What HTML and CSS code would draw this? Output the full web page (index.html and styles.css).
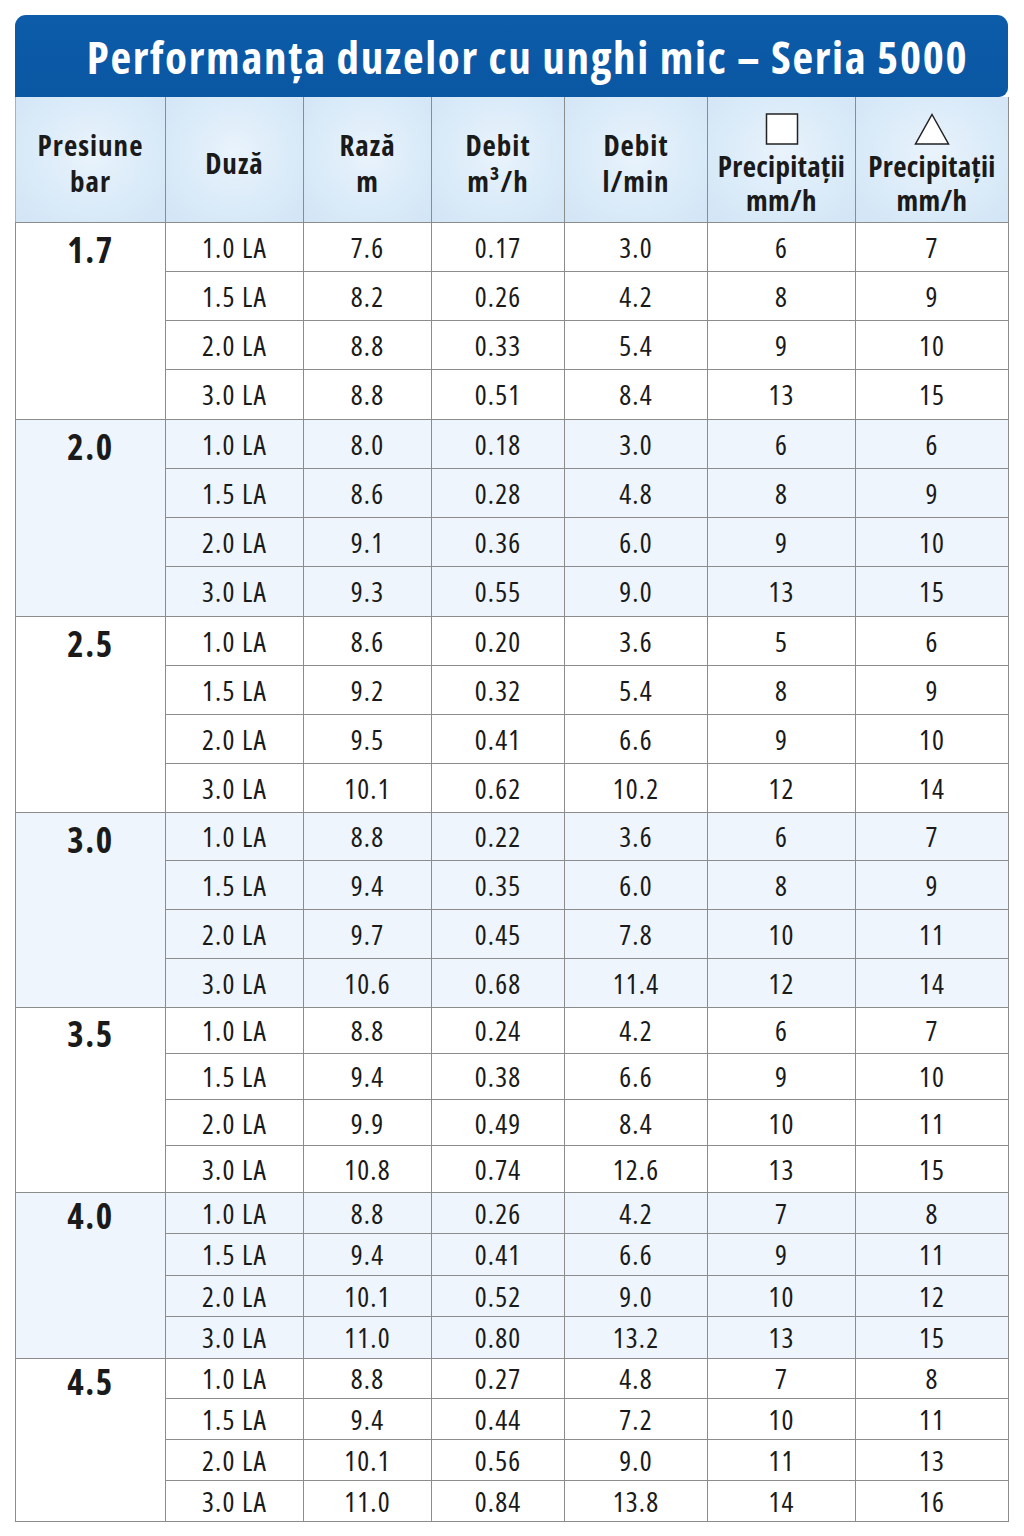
FILE: index.html
```html
<!DOCTYPE html>
<html lang="ro">
<head>
<meta charset="utf-8">
<title>Performanța duzelor cu unghi mic – Seria 5000</title>
<link rel="stylesheet" href="styles.css">
</head>
<body>
<div class="sheet">
  <div class="title">Performanța duzelor cu unghi mic – Seria 5000</div>
  <table class="perf">
    <colgroup>
      <col class="c1"><col class="c2"><col class="c3"><col class="c4"><col class="c5"><col class="c6"><col class="c7">
    </colgroup>
    <thead>
      <tr>
        <th>Presiune<br>bar</th>
        <th>Duză</th>
        <th>Rază<br>m</th>
        <th>Debit<br>m³/h</th>
        <th>Debit<br>l/min</th>
        <th class="pr"><svg class="ico" width="34" height="32" viewBox="0 0 34 32"><rect x="1.5" y="1" width="31" height="30" fill="#fff" stroke="#222" stroke-width="1.5"/></svg><span class="l1">Precipitații</span><span class="l2">mm/h</span></th>
        <th class="pr"><svg class="ico" width="36" height="32" viewBox="0 0 36 32"><polygon points="18,1.5 34.5,31 1.5,31" fill="#fff" stroke="#222" stroke-width="1.5" stroke-linejoin="miter"/></svg><span class="l1">Precipitații</span><span class="l2">mm/h</span></th>
      </tr>
    </thead>
    <tbody class="g g1">
      <tr><td class="p" rowspan="4"><div class="pl">1.7</div></td><td>1.0 LA</td><td>7.6</td><td>0.17</td><td>3.0</td><td>6</td><td>7</td></tr>
      <tr><td>1.5 LA</td><td>8.2</td><td>0.26</td><td>4.2</td><td>8</td><td>9</td></tr>
      <tr><td>2.0 LA</td><td>8.8</td><td>0.33</td><td>5.4</td><td>9</td><td>10</td></tr>
      <tr><td>3.0 LA</td><td>8.8</td><td>0.51</td><td>8.4</td><td>13</td><td>15</td></tr>
    </tbody>
    <tbody class="g g2 tint">
      <tr><td class="p" rowspan="4"><div class="pl">2.0</div></td><td>1.0 LA</td><td>8.0</td><td>0.18</td><td>3.0</td><td>6</td><td>6</td></tr>
      <tr><td>1.5 LA</td><td>8.6</td><td>0.28</td><td>4.8</td><td>8</td><td>9</td></tr>
      <tr><td>2.0 LA</td><td>9.1</td><td>0.36</td><td>6.0</td><td>9</td><td>10</td></tr>
      <tr><td>3.0 LA</td><td>9.3</td><td>0.55</td><td>9.0</td><td>13</td><td>15</td></tr>
    </tbody>
    <tbody class="g g3">
      <tr><td class="p" rowspan="4"><div class="pl">2.5</div></td><td>1.0 LA</td><td>8.6</td><td>0.20</td><td>3.6</td><td>5</td><td>6</td></tr>
      <tr><td>1.5 LA</td><td>9.2</td><td>0.32</td><td>5.4</td><td>8</td><td>9</td></tr>
      <tr><td>2.0 LA</td><td>9.5</td><td>0.41</td><td>6.6</td><td>9</td><td>10</td></tr>
      <tr><td>3.0 LA</td><td>10.1</td><td>0.62</td><td>10.2</td><td>12</td><td>14</td></tr>
    </tbody>
    <tbody class="g g4 tint">
      <tr><td class="p" rowspan="4"><div class="pl">3.0</div></td><td>1.0 LA</td><td>8.8</td><td>0.22</td><td>3.6</td><td>6</td><td>7</td></tr>
      <tr><td>1.5 LA</td><td>9.4</td><td>0.35</td><td>6.0</td><td>8</td><td>9</td></tr>
      <tr><td>2.0 LA</td><td>9.7</td><td>0.45</td><td>7.8</td><td>10</td><td>11</td></tr>
      <tr><td>3.0 LA</td><td>10.6</td><td>0.68</td><td>11.4</td><td>12</td><td>14</td></tr>
    </tbody>
    <tbody class="g g5">
      <tr><td class="p" rowspan="4"><div class="pl">3.5</div></td><td>1.0 LA</td><td>8.8</td><td>0.24</td><td>4.2</td><td>6</td><td>7</td></tr>
      <tr><td>1.5 LA</td><td>9.4</td><td>0.38</td><td>6.6</td><td>9</td><td>10</td></tr>
      <tr><td>2.0 LA</td><td>9.9</td><td>0.49</td><td>8.4</td><td>10</td><td>11</td></tr>
      <tr><td>3.0 LA</td><td>10.8</td><td>0.74</td><td>12.6</td><td>13</td><td>15</td></tr>
    </tbody>
    <tbody class="g g6 tint">
      <tr><td class="p" rowspan="4"><div class="pl">4.0</div></td><td>1.0 LA</td><td>8.8</td><td>0.26</td><td>4.2</td><td>7</td><td>8</td></tr>
      <tr><td>1.5 LA</td><td>9.4</td><td>0.41</td><td>6.6</td><td>9</td><td>11</td></tr>
      <tr><td>2.0 LA</td><td>10.1</td><td>0.52</td><td>9.0</td><td>10</td><td>12</td></tr>
      <tr><td>3.0 LA</td><td>11.0</td><td>0.80</td><td>13.2</td><td>13</td><td>15</td></tr>
    </tbody>
    <tbody class="g g7">
      <tr><td class="p" rowspan="4"><div class="pl">4.5</div></td><td>1.0 LA</td><td>8.8</td><td>0.27</td><td>4.8</td><td>7</td><td>8</td></tr>
      <tr><td>1.5 LA</td><td>9.4</td><td>0.44</td><td>7.2</td><td>10</td><td>11</td></tr>
      <tr><td>2.0 LA</td><td>10.1</td><td>0.56</td><td>9.0</td><td>11</td><td>13</td></tr>
      <tr><td>3.0 LA</td><td>11.0</td><td>0.84</td><td>13.8</td><td>14</td><td>16</td></tr>
    </tbody>
  </table>
</div>
</body>
</html>
```
FILE: styles.css
```css
html, body {
  margin: 0;
  padding: 0;
  background: #ffffff;
}

body {
  font-family: "Open Sans", "Noto Sans", sans-serif;
  font-stretch: 75%;
  color: #1a1a1a;
}

.sheet {
  width: 993px;
  margin: 15px 0 0 15px;
}

.title {
  height: 82px;
  box-sizing: border-box;
  padding-left: 32px;
  display: flex;
  align-items: center;
  justify-content: center;
  background: linear-gradient(#0c5ca9, #0a57a3);
  border-radius: 11px 11px 9px 0;
  color: #ffffff;
  font-weight: 700;
  font-size: 45px;
  letter-spacing: 1.7px;
  white-space: nowrap;
}

.perf {
  width: 993px;
  border-collapse: collapse;
  table-layout: fixed;
}

.c1 { width: 150px; }
.c2 { width: 138px; }
.c3 { width: 128px; }
.c4 { width: 133px; }
.c5 { width: 143px; }
.c6 { width: 148px; }
.c7 { width: 153px; }

.perf th,
.perf td {
  border: 1px solid #8c8c8c;
  padding: 0;
  text-align: center;
}

.perf thead tr { height: 125px; }

.perf thead th {
  background: radial-gradient(ellipse at 50% 45%, #e9f3fc 0%, #d9eaf8 60%, #d2e5f5 100%);
  font-weight: 700;
  font-size: 29px;
  line-height: 36px;
  letter-spacing: 1px;
  vertical-align: middle;
  padding-top: 7px;
  border-top: none;
}

.perf thead tr th:first-child { border-left-color: #b0b0b0; }

.perf th.pr {
  vertical-align: top;
  padding-top: 16px;
  letter-spacing: 0.3px;
}

.perf th.pr .ico {
  display: block;
  margin: 0 auto 4px;
}

.perf th.pr .l1,
.perf th.pr .l2 {
  display: block;
  height: 34px;
  line-height: 34px;
}

.perf td {
  font-size: 28px;
  font-weight: 400;
  letter-spacing: 1.2px;
  vertical-align: middle;
}

.tint td { background: #eef5fc; }

.perf td.p {
  vertical-align: top;
  font-weight: 700;
  font-size: 35px;
  letter-spacing: 1.5px;
}

.g1 tr, .g2 tr { height: 49.25px; }
.g3 tr { height: 49px; }
.g4 tr { height: 48.75px; }
.g5 tr { height: 46.25px; }
.g6 tr { height: 41.5px; }
.g7 tr { height: 40.75px; }

.g1 .pl, .g2 .pl, .g3 .pl, .g4 .pl { line-height: 54px; }
.g5 .pl { line-height: 52px; }
.g6 .pl, .g7 .pl { line-height: 46px; }
```
